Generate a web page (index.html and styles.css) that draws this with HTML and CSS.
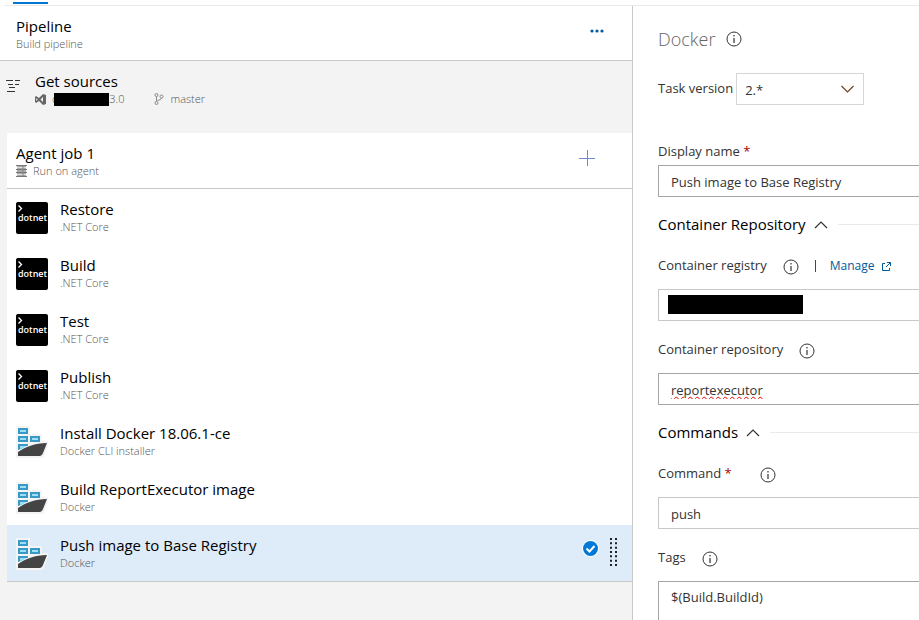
FILE: index.html
```html
<!DOCTYPE html>
<html lang="en">
<head>
<meta charset="utf-8">
<title>Build pipeline</title>
<link rel="stylesheet" href="styles.css">
</head>
<body>
<svg class="defs" aria-hidden="true">
  <symbol id="info" viewBox="0 0 16 16">
    <circle cx="8" cy="8" r="7" fill="none" stroke="#333" stroke-width="1"/>
    <path d="M8 7v5M8 4v1.500" stroke="#333" stroke-width="1.200" fill="none"/>
  </symbol>
  <symbol id="ship" viewBox="0 0 32 32">
    <path d="M0 0h14v8h12v7h6v3l-5 14H0z" fill="#f4f4f4"/>
    <path d="M2 2h10v6H2zM2 10h10v6H2zM14 10h10v6H14zM2 18h10v3L2 24z" fill="#3999c6"/>
    <path d="M4 4h6v2H4zM4 12h6v2H4zM16 12h6v2h-6zM4 20h6v1l-6 2z" fill="#9de0f5"/>
    <path d="M1 26C8 20 19 16 31 16l1 2-5 14H1z" fill="#f4f4f4"/>
    <path d="M2 26C9 21 19 17 31 17L27 27q-1 3-3 3H2z" fill="#444"/>
  </symbol>
  <symbol id="chevron-up" viewBox="0 0 14 8">
    <path d="M1 7l6-6 6 6" fill="none" stroke="#333" stroke-width="1.200"/>
  </symbol>
  <symbol id="prompt" viewBox="0 0 5 7">
    <path d="M.5.5l3 3-3 3" fill="none" stroke="#fff" stroke-width="1.300"/>
  </symbol>
</svg>

<header class="tabs"><span class="tab-mark"></span></header>

<div class="workspace">
  <main class="pipeline">
    <section class="row header-row">
      <div class="text">
        <h1 class="title">Pipeline</h1>
        <p class="sub">Build pipeline</p>
      </div>
      <button class="icon-btn more" aria-label="More actions">
        <svg width="14" height="4" viewBox="0 0 14 4"><g fill="#005a9e"><circle cx="2" cy="2" r="1.600"/><circle cx="7" cy="2" r="1.600"/><circle cx="12" cy="2" r="1.600"/></g></svg>
      </button>
    </section>

    <section class="row sources-row">
      <svg class="sources-icon" width="15" height="14" viewBox="0 0 15 14"><path d="M0 1.500h7M9 1.500h5M2 5.500h5M9 5.500h4M3 8.500h6M1 12.500h8" stroke="#333" fill="none"/></svg>
      <div class="text">
        <h2 class="title">Get sources</h2>
        <p class="sub repo">
          <svg width="11" height="11" viewBox="0 0 11 11"><path fill="#666" fill-rule="evenodd" d="M8 0l3 1v9l-3 1-4-4-3 2-1-1V3l1-1 3 2zM8 3L5.500 5.500 8 8zM1.300 4v3l1.500-1.500z"/></svg>
          <span class="repo-name">c<span class="redacted"></span>3.0</span>
          <svg class="branch" width="10" height="12" viewBox="0 0 10 12"><g fill="none" stroke="#888"><circle cx="2.500" cy="2" r="1.500"/><circle cx="2.500" cy="10" r="1.500"/><circle cx="7.500" cy="3.500" r="1.500"/><path d="M2.500 3.500v5M7.500 5q0 2-4 2.500"/></g></svg>
          <span>master</span>
        </p>
      </div>
    </section>

    <div class="job">
      <section class="row job-row">
        <div class="text">
          <h2 class="title">Agent job 1</h2>
          <p class="sub agent">
            <svg width="11" height="12" viewBox="0 0 11 12"><path fill="#aaa" d="M1 0h9v12H1z"/><path d="M0 .5h11M0 4.500h11M0 7.500h11M0 11.500h11" stroke="#777"/><path d="M1 2.500h9M1 9.500h9" stroke="#ddd"/><path d="M7 1v10" stroke="#888"/></svg>
            <span>Run on agent</span>
          </p>
        </div>
        <button class="icon-btn add" aria-label="Add a task">
          <svg width="16" height="16" viewBox="0 0 16 16"><path d="M0 8.500h16M8.500 0v16" stroke="#7088d0" fill="none"/></svg>
        </button>
      </section>

      <ul class="tasks">
        <li><button class="task"><span class="dotnet"><svg class="prompt"><use href="#prompt"/></svg><span>dotnet</span></span><span class="text"><span class="title">Restore</span><span class="sub">.NET Core</span></span></button></li>
        <li><button class="task"><span class="dotnet"><svg class="prompt"><use href="#prompt"/></svg><span>dotnet</span></span><span class="text"><span class="title">Build</span><span class="sub">.NET Core</span></span></button></li>
        <li><button class="task"><span class="dotnet"><svg class="prompt"><use href="#prompt"/></svg><span>dotnet</span></span><span class="text"><span class="title">Test</span><span class="sub">.NET Core</span></span></button></li>
        <li><button class="task"><span class="dotnet"><svg class="prompt"><use href="#prompt"/></svg><span>dotnet</span></span><span class="text"><span class="title">Publish</span><span class="sub">.NET Core</span></span></button></li>
        <li><button class="task"><svg class="ship"><use href="#ship"/></svg><span class="text"><span class="title">Install Docker 18.06.1-ce</span><span class="sub">Docker CLI installer</span></span></button></li>
        <li><button class="task"><svg class="ship"><use href="#ship"/></svg><span class="text"><span class="title">Build ReportExecutor image</span><span class="sub">Docker</span></span></button></li>
        <li><button class="task selected" aria-current="true"><svg class="ship"><use href="#ship"/></svg><span class="text"><span class="title">Push image to Base Registry</span><span class="sub">Docker</span></span>
          <svg class="check" width="17" height="17" viewBox="0 0 17 17"><circle cx="8.500" cy="8.500" r="8.500" fill="#fff"/><circle cx="8.500" cy="8.500" r="7.500" fill="#0078d7"/><path d="M4.500 8.500l3 3 5-5.500" fill="none" stroke="#fff" stroke-width="2"/></svg>
          <svg class="grip" width="7" height="28" viewBox="0 0 7 28"><path d="M1 0v28M6 0v28" stroke="#222" stroke-width="2" stroke-dasharray="2 2.330"/></svg>
        </button></li>
      </ul>
    </div>
  </main>

  <form class="details">
    <div class="details-title">
      <h2>Docker</h2>
      <svg class="info"><use href="#info"/></svg>
    </div>

    <div class="version">
      <label for="version">Task version</label>
      <select id="version"><option>2.*</option></select>
    </div>

    <label class="name-label" for="name">Display name <span class="required">*</span></label>
    <input class="box strong" id="name" type="text" value="Push image to Base Registry">

    <h3 class="group">Container Repository <svg class="chevron"><use href="#chevron-up"/></svg></h3>

    <div class="label-row">
      <label for="registry">Container registry</label>
      <svg class="info"><use href="#info"/></svg>
      <span class="divider"></span>
      <a href="#">Manage <svg width="9" height="9" viewBox="0 0 9 9"><path d="M3 1.500H.5v7h7V6M5 .5h3.500V4M8.500.5L4 5" fill="none" stroke="#005a9e"/></svg></a>
    </div>
    <div class="box combo"><span class="mask"></span><input id="registry" type="text"></div>

    <div class="label-row">
      <label for="repository">Container repository</label>
      <svg class="info"><use href="#info"/></svg>
    </div>
    <input class="box strong misspelt" id="repository" type="text" value="reportexecutor" spellcheck="false">

    <h3 class="group">Commands <svg class="chevron"><use href="#chevron-up"/></svg></h3>

    <div class="label-row">
      <label for="command">Command <span class="required">*</span></label>
      <svg class="info command-info"><use href="#info"/></svg>
    </div>
    <input class="box" id="command" type="text" value="push">

    <div class="label-row">
      <label for="tags">Tags</label>
      <svg class="info"><use href="#info"/></svg>
    </div>
    <textarea class="box strong" id="tags" rows="1" spellcheck="false">$(Build.BuildId)</textarea>
  </form>
</div>
</body>
</html>
```
FILE: styles.css
```css
* {
  box-sizing: border-box;
}

body {
  display: flex;
  flex-direction: column;
  min-height: 100vh;
  margin: 0;
  background: #fff;
  color: #333;
  font: 13px/20px "Open Sans", "Noto Sans", sans-serif;
}

h1, h2, h3, p, ul {
  margin: 0;
  padding: 0;
  font-weight: 400;
}

svg {
  flex: none;
}

button, input, select, textarea {
  border-radius: 0;
  color: inherit;
  font: inherit;
}

.defs {
  position: absolute;
  width: 0;
  height: 0;
}

.tabs {
  height: 6px;
  margin-left: 4px;
  padding: 2px 9px 0;
  border-bottom: 1px solid #eaeaea;
}

.tab-mark {
  display: block;
  width: 35px;
  height: 2px;
  background: #0078d7;
}

.workspace {
  display: grid;
  flex: 1;
  grid-template-columns: 633fr 286fr;
}

/* Pipeline steps */

.pipeline {
  min-width: 0;
  border-right: 1px solid #c8c8c8;
  background: #f3f3f3;
}

.row {
  display: flex;
  align-items: flex-start;
  padding-top: 10px;
}

.text {
  flex: 1;
  min-width: 0;
}

.title {
  display: block;
  color: #000;
  font-size: 15px;
  line-height: 20px;
}

.sub {
  display: block;
  margin-top: 1px;
  color: #555;
  font-size: 11px;
  font-weight: 300;
  line-height: 14px;
}

.header-row {
  height: 55px;
  padding-left: 16px;
  border-bottom: 1px solid #c8c8c8;
  background: #fff;
}

.sources-row {
  height: 72px;
  padding-left: 6px;
  gap: 14px;
}

.sources-icon {
  margin-top: 8px;
}

.repo, .agent {
  display: flex;
  align-items: center;
  gap: 6px;
}

.repo-name {
  display: flex;
  align-items: center;
}

.redacted {
  width: 55px;
  height: 13px;
  margin-left: -3px;
  background: #000;
}

.branch {
  margin-left: 24px;
}

.icon-btn {
  display: flex;
  align-items: center;
  justify-content: center;
  width: 30px;
  height: 30px;
  padding: 0;
  border: 0;
  background: none;
}

.more {
  margin-right: 20px;
}

.add {
  margin-right: 30px;
}

.job {
  margin-left: 7px;
  border-bottom: 1px solid #c8c8c8;
  background: #fff;
}

.job-row {
  height: 56px;
  padding-left: 9px;
  border-bottom: 1px solid #c8c8c8;
}

.tasks {
  list-style: none;
}

.task {
  display: flex;
  align-items: flex-start;
  width: 100%;
  height: 56px;
  padding: 10px 15px 0 9px;
  border: 0;
  background: none;
  gap: 12px;
  text-align: left;
}

.selected {
  background: #deebf8;
}

.dotnet, .ship, .grip {
  margin-top: 3px;
}

.check {
  margin: 5px -1px 0 0;
}

.dotnet {
  display: flex;
  flex: none;
  flex-direction: column;
  width: 32px;
  height: 32px;
  padding: 3px 2px;
  border-radius: 2px;
  background: #000;
  color: #fff;
  font-size: 9px;
  font-weight: 600;
  line-height: 12px;
}

.prompt {
  width: 5px;
  height: 7px;
}

.ship {
  width: 32px;
  height: 32px;
}

/* Task details */

.details {
  display: flex;
  flex-direction: column;
  min-width: 0;
  padding: 21px 0 0 25px;
}

.details-title {
  display: flex;
  align-items: center;
  height: 24px;
  gap: 11px;
}

.details-title h2 {
  color: #666;
  font-size: 18px;
  font-weight: 300;
}

.info {
  width: 16px;
  height: 16px;
}

.version {
  display: flex;
  align-items: center;
  margin-top: 22px;
  gap: 3px;
}

.version label {
  padding-bottom: 2px;
}

.version select {
  width: 128px;
  height: 32px;
  padding: 2px 8px 0;
  border: 1px solid #d6d6d6;
  appearance: none;
  background: #fff url("data:image/svg+xml,%3Csvg xmlns='http://www.w3.org/2000/svg' width='13' height='8'%3E%3Cpath d='M.5 1l6 6 6-6' fill='none' stroke='%23704020' stroke-width='1.200'/%3E%3C/svg%3E") no-repeat right 9px center;
}

.name-label {
  margin: 36px 0 4px;
}

.required {
  color: #a80000;
}

.box {
  width: 100%;
  height: 32px;
  padding: 2px 12px 0;
  border: 1px solid #c8c8c8;
  border-right: 0;
  background: #fff;
  outline: 0;
}

.strong {
  border-color: #a6a6a6;
}

.group {
  display: flex;
  align-items: center;
  height: 22px;
  margin: 16px 0 2px;
  color: #000;
  font-size: 15px;
  gap: 8px;
}

.group::after {
  flex: 1;
  height: 1px;
  margin-left: 2px;
  background: #eaeaea;
  content: "";
}

.chevron {
  width: 14px;
  height: 8px;
  margin-top: 2px;
}

.label-row {
  display: flex;
  align-items: center;
  height: 24px;
  margin: 16px 0 12px;
  gap: 16px;
}

.label-row .info {
  margin-top: 4px;
}

.label-row .command-info {
  margin-left: 12px;
}

.divider {
  width: 1px;
  height: 12px;
  margin-top: 2px;
  background: #005a9e;
}

.label-row a {
  display: flex;
  align-items: center;
  margin-left: -2px;
  padding-top: 2px;
  color: #005a9e;
  font-size: 12px;
  gap: 8px;
  text-decoration: none;
}

.combo {
  display: flex;
  align-items: center;
  padding: 0 9px 2px;
}

.combo input {
  flex: 1;
  min-width: 0;
  border: 0;
  outline: 0;
}

.mask {
  width: 135px;
  height: 19px;
  background: #000;
}

.misspelt {
  text-decoration: underline wavy #e00 1px;
}

textarea.box {
  flex: 1;
  min-height: 32px;
  padding: 5px 12px;
  border-bottom: 0;
  resize: none;
}
```
